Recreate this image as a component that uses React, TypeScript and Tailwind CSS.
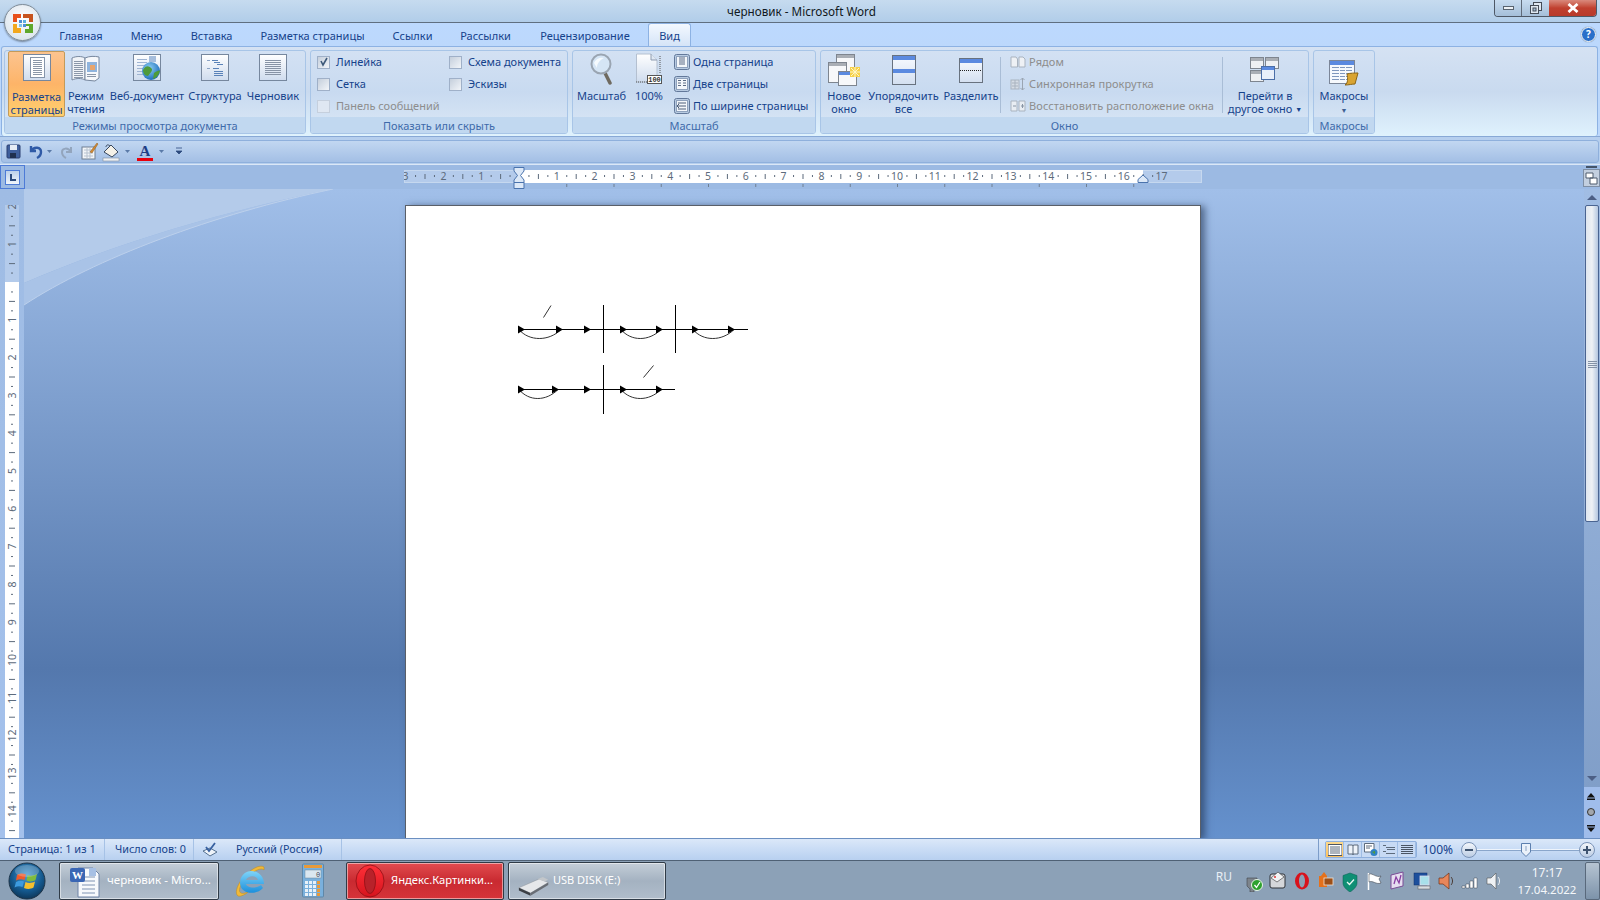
import React from 'react';

const ink = 'text-[#15428b]';

const Defs = () => (
  <svg className="absolute w-0 h-0">
    <defs>
      <linearGradient id="btn" x1="0" y1="0" x2="0" y2="1">
        <stop offset="0" stopColor="#ffffff" />
        <stop offset="1" stopColor="#cfdcee" />
      </linearGradient>
      <linearGradient id="hdr" x1="0" y1="0" x2="0" y2="1">
        <stop offset="0" stopColor="#f8fbff" />
        <stop offset="1" stopColor="#d3dff0" />
      </linearGradient>
      <radialGradient id="globe" cx="0.4" cy="0.35" r="0.7">
        <stop offset="0" stopColor="#8fd0f5" />
        <stop offset="1" stopColor="#1768b8" />
      </radialGradient>
      <radialGradient id="orb" cx="0.5" cy="0.35" r="0.7">
        <stop offset="0" stopColor="#4b9bd0" />
        <stop offset="0.6" stopColor="#14598f" />
        <stop offset="1" stopColor="#0c2f4d" />
      </radialGradient>
      <linearGradient id="opera" x1="0" y1="0" x2="0" y2="1">
        <stop offset="0" stopColor="#ff3038" />
        <stop offset="1" stopColor="#d5141e" />
      </linearGradient>
      <linearGradient id="ieBlue" x1="0" y1="0" x2="0" y2="1">
        <stop offset="0" stopColor="#7fd4f8" />
        <stop offset="1" stopColor="#1c8fdc" />
      </linearGradient>
    </defs>
  </svg>
);

const Lines = ({ x, y, w, n, step = 2, color = '#8b97a8' }: { x: number; y: number; w: number; n: number; step?: number; color?: string }) => (
  <>
    {Array.from({ length: n }).map((_, i) => (
      <rect key={i} x={x} y={y + i * step} width={w} height={1} fill={color} />
    ))}
  </>
);

const Frame = ({ children }: { children?: React.ReactNode }) => (
  <svg width="30" height="29" viewBox="0 0 30 29">
    <rect x="1.5" y="1.5" width="27" height="26" fill="url(#btn)" stroke="#76879e" />
    {children}
  </svg>
);

const PrintIcon = () => (
  <Frame>
    <rect x="8.5" y="4.5" width="14" height="20" fill="#fff" stroke="#8695aa" />
    <Lines x={11} y={7} w={9} n={8} />
  </Frame>
);

const ReadIcon = () => (
  <svg width="32" height="29" viewBox="0 0 32 29">
    <path d="M2 4 C6 2 12 2 15 4 L15 26 C12 24 6 24 2 26 Z" fill="#f0f3f7" stroke="#76879e" />
    <path d="M15 4 C19 2 25 2 29 3 L29 24 L25 27 L15 26 Z" fill="#f6f8fb" stroke="#76879e" />
    <Lines x={4} y={7} w={9} n={9} />
    <rect x="17" y="8" width="10" height="10" fill="#8fb4dd" />
    <rect x="20" y="11" width="5" height="5" fill="#e8a56c" />
    <Lines x={17} y={20} w={9} n={2} />
  </svg>
);

const WebIcon = () => (
  <Frame>
    <Lines x={5} y={6} w={10} n={6} step={3} color="#9fb4d2" />
    <rect x="17" y="3" width="7" height="6" fill="#a5bddc" />
    <circle cx="19" cy="18" r="9" fill="url(#globe)" />
    <path d="M11 17 C14 12 17 13 19 15 C22 17 18 20 16 23 C13 23 11 20 11 17 Z M22 20 C25 18 27 17 28 18 C27 22 24 25 21 26 Z" fill="#4f9b3a" />
  </Frame>
);

const OutlineIcon = () => (
  <Frame>
    <rect x="7" y="7" width="3" height="1" fill="#8aa2c4" />
    <rect x="12" y="7" width="6" height="1" fill="#5a82b8" />
    <rect x="14" y="9" width="6" height="1" fill="#5a82b8" />
    <rect x="17" y="11" width="6" height="1" fill="#5a82b8" />
    <rect x="7" y="15" width="3" height="1" fill="#8aa2c4" />
    <rect x="13" y="15" width="6" height="1" fill="#5a82b8" />
    <Lines x={14} y={18} w={9} n={3} step={2} color="#5a82b8" />
  </Frame>
);

const DraftIcon = () => (
  <Frame>
    <Lines x={7} y={7} w={16} n={8} color="#8793a5" />
  </Frame>
);

const ZoomGlass = () => (
  <svg width="24" height="32" viewBox="0 0 24 32">
    <path d="M15 20 L20 30" stroke="#6f6a60" strokeWidth="3.5" strokeLinecap="round" />
    <circle cx="11" cy="11" r="9.5" fill="#d5e5f5" stroke="#9aa5b2" strokeWidth="2" />
    <path d="M4 10 C6 5 11 4 14 5 C10 7 7 10 7 15 Z" fill="#f5fafe" />
  </svg>
);

const Zoom100 = () => (
  <svg width="28" height="32" viewBox="0 0 28 32">
    <path d="M1.5 1 L16 1 L22 7 L22 29 L1.5 29 Z" fill="url(#btn)" stroke="#b4c0d0" />
    <path d="M16 1 L16 7 L22 7" fill="#dfe8f3" stroke="#8d9bb0" />
    <path d="M1 29 H13 M25 3 V21" stroke="#555" strokeDasharray="1 1" fill="none" />
    <rect x="12.5" y="22.5" width="14" height="8" fill="#fff" stroke="#555" />
    <text x="19.5" y="29" textAnchor="middle" fontSize="7" fontWeight="700" fontFamily="'Liberation Mono', monospace" fill="#333">100</text>
  </svg>
);

const SmallBox = ({ children }: { children: React.ReactNode }) => (
  <svg width="16" height="16" viewBox="0 0 16 16" className="shrink-0">
    <rect x="0.5" y="0.5" width="15" height="15" rx="2" fill="#b8cbe2" stroke="#62789a" />
    <rect x="2.5" y="2.5" width="11" height="11" fill="#f4f7fb" stroke="#8fa2bd" />
    {children}
  </svg>
);

const WindowPane = ({ x, y, w, h, head = '#a9aeb5', body = '#f7f8fa', stroke = '#7e858f' }: { x: number; y: number; w: number; h: number; head?: string; body?: string; stroke?: string }) => (
  <>
    <rect x={x + 0.5} y={y + 0.5} width={w} height={h} fill={body} stroke={stroke} />
    <rect x={x + 1} y={y + 1} width={w - 1} height={3} fill={head} />
  </>
);

const NewWindowIcon = () => (
  <svg width="34" height="32" viewBox="0 0 34 32">
    <WindowPane x={9} y={0} w={18} h={24} />
    <WindowPane x={1} y={8} w={18} h={20} />
    <WindowPane x={11} y={17} w={18} h={14} head="#5b8ae0" />
    <rect x="23" y="13" width="10" height="10" fill="#f6d14a" />
    <path d="M28 13 V23 M23 18 H33 M24 14 L32 22 M32 14 L24 22" stroke="#fff6c8" strokeWidth="1" />
  </svg>
);

const ArrangeIcon = () => (
  <svg width="26" height="32" viewBox="0 0 26 32">
    <rect x="1.5" y="1.5" width="23" height="29" fill="url(#hdr)" stroke="#68727f" />
    <rect x="2" y="2" width="22" height="4" fill="#5b8ae0" />
    <rect x="2" y="15" width="22" height="4" fill="#5b8ae0" />
  </svg>
);

const SplitIcon = () => (
  <svg width="26" height="28" viewBox="0 0 26 28">
    <rect x="1.5" y="1.5" width="23" height="24" fill="url(#hdr)" stroke="#68727f" />
    <rect x="2" y="2" width="22" height="4" fill="#5b8ae0" />
    <path d="M2 13.5 H24" stroke="#222" strokeDasharray="1 1" />
  </svg>
);

const SwitchIcon = () => (
  <svg width="32" height="28" viewBox="0 0 32 28">
    <WindowPane x={1} y={1} w={13} h={11} body="#eef0f3" />
    <WindowPane x={16} y={1} w={13} h={11} body="#eef0f3" />
    <WindowPane x={1} y={14} w={13} h={11} body="#eef0f3" />
    <rect x="12.5" y="10.5" width="13" height="13" fill="#e8effa" stroke="#4b6ea8" />
    <rect x="13" y="11" width="12" height="3" fill="#5b8ae0" />
  </svg>
);

const MacroIcon = () => (
  <svg width="32" height="28" viewBox="0 0 32 28">
    <rect x="1.5" y="1.5" width="25" height="23" fill="#f6f9fd" stroke="#7b8698" />
    <rect x="2" y="2" width="24" height="4" fill="#5b8ae0" />
    <Lines x={4} y={8} w={7} n={5} step={3} color="#7f97bd" />
    <Lines x={12} y={8} w={5} n={5} step={3} color="#7f97bd" />
    <Lines x={18} y={8} w={6} n={5} step={3} color="#7f97bd" />
    <path d="M19 15 C22 14 27 14 30 14 L27 25 C24 25 21 26 17 26 C20 24 20 20 19 15 Z" fill="#d9a432" stroke="#8b6516" />
  </svg>
);

const Tabs = () => {
  const items: [string, string][] = [
    ['Главная', 'w-[70px]'],
    ['Меню', 'w-[61px]'],
    ['Вставка', 'w-[69px]'],
    ['Разметка страницы', 'w-[133px]'],
    ['Ссылки', 'w-[67px]'],
    ['Рассылки', 'w-[79px]'],
    ['Рецензирование', 'w-[120px]'],
  ];
  return (
    <div className="h-[24px] bg-gradient-to-b from-[#bcd9fe] to-[#bcd8fc] flex items-end pl-[46px] border-t border-[#5f6f80] relative shrink-0">
      {items.map(([t, w]) => (
        <div key={t} className={`${w} text-center h-[22px] leading-[24px] text-[11px] ${ink}`}>{t}</div>
      ))}
      <div className={`ml-[3px] w-[43px] h-[23px] text-center leading-[24px] text-[11px] ${ink} rounded-t-[3px] border border-b-0 border-[#8db2e3] bg-gradient-to-b from-[#f3f8ff] to-[#d5e4f7]`}>Вид</div>
      <div className="ml-auto mr-[4px] mb-[4px] w-[15px] h-[15px] rounded-full bg-[#2a6fc9] border border-white shadow-[0_0_1px_#456] text-white text-[10px] font-bold leading-[13px] text-center">?</div>
    </div>
  );
};

const Group = ({ label, className, children }: { label: string; className: string; children: React.ReactNode }) => (
  <div className={`${className} h-[84px] flex flex-col rounded-[3px] border border-[#a8c5e7] overflow-hidden bg-gradient-to-b from-[#d3e1f3] via-[#c8daf0] to-[#dbe8f6]`}>
    <div className="h-[66px] flex">{children}</div>
    <div className="h-[16px] bg-[#c1d8f0] text-center text-[11px] leading-[18px] text-[#3e6aaa]">{label}</div>
  </div>
);

const BigBtn = ({ w, icon, text, active, top = 'pt-[2px]' }: { w: string; icon: React.ReactNode; text: React.ReactNode; active?: boolean; top?: string }) => (
  <div className={`${w} h-[66px] flex flex-col items-center text-[11px] leading-[13px] ${ink} text-center ${active ? 'rounded-[2px] border border-[#c39a5a] bg-gradient-to-b from-[#fcc48f] via-[#fdb468] to-[#ffd06e]' : ''}`}>
    <div className={`h-[38px] shrink-0 flex items-start justify-center ${top}`}>{icon}</div>
    <div className="whitespace-nowrap">{text}</div>
  </div>
);

const Check = ({ label, checked, disabled }: { label: string; checked?: boolean; disabled?: boolean }) => (
  <div className={`h-[22px] flex items-center gap-[6px] text-[11px] whitespace-nowrap ${disabled ? 'text-[#8d8d8d]' : ink}`}>
    <div className={`w-[13px] h-[13px] border flex items-center justify-center ${disabled ? 'border-[#c5cfdd] bg-[#dfe7f2]' : 'border-[#9fb0c8] bg-gradient-to-br from-[#c5cfdc] to-[#f2f5f9]'}`}>
      {checked && (
        <svg width="10" height="10" viewBox="0 0 10 10">
          <path d="M2 4 L4 8 L8 1" stroke="#3f5a7a" strokeWidth="1.6" fill="none" />
        </svg>
      )}
    </div>
    <span>{label}</span>
  </div>
);

const ListRow = ({ icon, text, disabled }: { icon: React.ReactNode; text: string; disabled?: boolean }) => (
  <div className={`h-[22px] flex items-center gap-[3px] text-[11px] whitespace-nowrap ${disabled ? 'text-[#8d8d8d] tracking-[0.1px]' : ink}`}>
    {icon}
    <span>{text}</span>
  </div>
);

const GrayIcon = ({ kind }: { kind: number }) => (
  <svg width="16" height="14" viewBox="0 0 16 14" className="shrink-0">
    {kind === 0 && (
      <path d="M1 2 H6 L7.500 4 V12 H1 Z M9 2 H13 L15 4 V12 H9 Z" fill="#eef1f5" stroke="#a9b3bf" />
    )}
    {kind === 1 && (
      <>
        <rect x="1" y="3" width="8" height="9" fill="#d5dce5" stroke="#a9b3bf" />
        <path d="M2 6 H8 M2 9 H8 M5 3 V12" stroke="#a9b3bf" />
        <path d="M12.5 1 V13 M10.5 3 L12.5 1 L14.5 3 M10.5 11 L12.5 13 L14.5 11" stroke="#9aa5b2" fill="none" />
      </>
    )}
    {kind === 2 && (
      <>
        <path d="M1 2 H7 V12 H1 Z M9 2 H15 V12 H9 Z" fill="#e8edf3" stroke="#a9b3bf" />
        <path d="M3 7 H6 M11 7 H14 M12.5 5 V9" stroke="#8895a5" />
      </>
    )}
  </svg>
);

const Ribbon = () => (
  <div className="h-[90px] shrink-0 bg-[#bcd8fc] px-[1px]">
    <div className="h-[90px] rounded-[3px] border border-[#8db2e3] border-b-0 pl-[2px] pt-[3px] flex gap-[4px] bg-gradient-to-b from-[#d5e2f3] via-[#c9daef] to-[#dff2fd] mr-[1px]">
      <Group label="Режимы просмотра документа" className="w-[302px]">
        <div className="flex pl-[3px]">
          <BigBtn w="w-[57px]" active top="pt-[1px]" icon={<PrintIcon />} text={<>Разметка<br />страницы</>} />
          <BigBtn w="w-[42px]" top="pt-[3px]" icon={<ReadIcon />} text={<>Режим<br />чтения</>} />
          <BigBtn w="w-[80px]" icon={<WebIcon />} text="Веб-документ" />
          <BigBtn w="w-[56px]" icon={<OutlineIcon />} text="Структура" />
          <BigBtn w="w-[60px]" icon={<DraftIcon />} text="Черновик" />
        </div>
      </Group>
      <Group label="Показать или скрыть" className="w-[258px]">
        <div className="w-[138px] pl-[6px]">
          <Check label="Линейка" checked />
          <Check label="Сетка" />
          <Check label="Панель сообщений" disabled />
        </div>
        <div>
          <Check label="Схема документа" />
          <Check label="Эскизы" />
        </div>
      </Group>
      <Group label="Масштаб" className="w-[244px]">
        <div className="flex pl-[2px]">
          <BigBtn w="w-[53px]" icon={<ZoomGlass />} text="Масштаб" />
          <BigBtn w="w-[42px]" icon={<Zoom100 />} text="100%" />
          <div className="ml-[4px]">
            <ListRow text="Одна страница" icon={<SmallBox><path d="M5 4 H11 M5 6 H11 M5 8 H11 M5 10 H11" stroke="#5a6b85" /></SmallBox>} />
            <ListRow text="Две страницы" icon={<SmallBox><path d="M4 4.5 H7 M4 7 H7 M4 9.5 H7 M9 4.5 H12 M9 7 H12 M9 9.5 H12" stroke="#5a6b85" /></SmallBox>} />
            <ListRow text="По ширине страницы" icon={<SmallBox><path d="M4 5 H12 M4 8 H12 M4 11 H12 M3 8 L5 6 M3 8 L5 10" stroke="#4b5d78" /></SmallBox>} />
          </div>
        </div>
      </Group>
      <Group label="Окно" className="w-[489px]">
        <div className="flex pl-[2px]">
          <BigBtn w="w-[42px]" top="pt-[3px]" icon={<NewWindowIcon />} text={<>Новое<br />окно</>} />
          <BigBtn w="w-[77px]" top="pt-[3px]" icon={<ArrangeIcon />} text={<>Упорядочить<br />все</>} />
          <BigBtn w="w-[58px]" top="pt-[6px]" icon={<SplitIcon />} text="Разделить" />
          <div className="w-px h-[56px] bg-[#a9bdd6] mt-[6px] mr-[9px]" />
          <div className="w-[212px]">
            <ListRow disabled text="Рядом" icon={<GrayIcon kind={0} />} />
            <ListRow disabled text="Синхронная прокрутка" icon={<GrayIcon kind={1} />} />
            <ListRow disabled text="Восстановить расположение окна" icon={<GrayIcon kind={2} />} />
          </div>
          <div className="w-px h-[56px] bg-[#a9bdd6] mt-[6px]" />
          <BigBtn
            w="w-[84px]"
            top="pt-[5px]"
            icon={<SwitchIcon />}
            text={<>Перейти в<br />другое окно <span className="text-[7px] align-[1px]">▼</span></>}
          />
        </div>
      </Group>
      <Group label="Макросы" className="w-[62px]">
        <BigBtn
          w="w-[60px]"
          top="pt-[8px]"
          icon={<MacroIcon />}
          text={<>Макросы<br /><span className="text-[7px] text-[#3e5f92]">▼</span></>}
        />
      </Group>
    </div>
  </div>
);

const Qat = () => (
  <div className="h-[28px] shrink-0 bg-[#b6cfee] pt-[3px] pb-px px-[1px] border-t border-[#88a9d6]">
    <div className="h-[23px] rounded-[3px] border border-[#8fb0dc] bg-gradient-to-b from-[#c2d7f1] to-[#a3bfe5] flex items-center pl-[3px] relative">
      <svg width="180" height="20" viewBox="5 142 180 20">
        <rect x="7" y="145" width="13" height="13" rx="1" fill="#3f5f9c" stroke="#2b3f70" />
        <rect x="10" y="145" width="7" height="5" fill="#e6ecf5" />
        <rect x="10" y="153" width="6" height="5" fill="#20304f" />
        <path d="M31 146 L31 151 L36 151 M31 151 C34 146 41 147 41 152 C41 155 39 157 37 158" stroke="#2f5aa6" strokeWidth="2.4" fill="none" />
        <path d="M47 150 L52 150 L49.5 153 Z" fill="#5a7aa8" />
        <path d="M71 147 L71 152 L66 152 M71 152 C68 147 62 148 62 152 C62 155 64 157 66 158" stroke="#93a5bd" strokeWidth="2" fill="none" />
        <rect x="82" y="147" width="13" height="12" fill="#f2f5f8" stroke="#6f7f92" />
        <path d="M84 150 H93 M84 153 H93 M84 156 H93 M87 148 V158 M90 148 V158" stroke="#b7c2cf" />
        <path d="M90 152 L97 143 L98 144 L92 153 Z" fill="#d48a32" stroke="#8a5a1c" strokeWidth="0.5" />
        <path d="M104 152 L111 145 L118 152 L112 157 Z" fill="#f4f1e8" stroke="#39485e" />
        <path d="M110 146 C108 144 106 145 106 147" stroke="#39485e" fill="none" />
        <rect x="103" y="158" width="16" height="3" fill="#eef1f4" stroke="#7f8ea0" strokeWidth="0.6" />
        <path d="M125 150 L130 150 L127.5 153 Z" fill="#5a7aa8" />
        <text x="145" y="156" textAnchor="middle" fontSize="15" fontWeight="700" fontFamily="'Liberation Serif', serif" fill="#1f3f86">A</text>
        <rect x="137" y="158" width="16" height="3" fill="#e8000c" />
        <path d="M159 150 L164 150 L161.5 153 Z" fill="#5a7aa8" />
        <path d="M176 148 H182 M176 151 L182 151 L179 154 Z" stroke="#2c4a7d" fill="#2c4a7d" strokeWidth="0.8" />
      </svg>
    </div>
  </div>
);

const HRuler = () => {
  const cm = 37.8;
  const origin = 115;
  const nums: number[] = [];
  for (let i = -3; i <= 17; i++) nums.push(i);
  return (
    <svg width="800" height="25" viewBox="0 0 800 25" className="absolute top-0 left-[404px]">
      <rect x="0.5" y="5.5" width="797" height="12" fill="#b4cbeb" stroke="#c6d8ef" />
      <rect x={origin} y="5" width="624" height="13" fill="#ffffff" />
      {nums.map((n) => {
        const x = origin + n * cm;
        return (
          <g key={n} fill="#5d6b7c">
            {n !== 0 && (
              <text x={x} y="15" textAnchor="middle" fontSize="10.5" fontFamily="'Noto Sans', sans-serif">{Math.abs(n)}</text>
            )}
            {n < 17 && (
              <>
                <rect x={x + cm * 0.25} y="10" width="1" height="2" />
                <rect x={x + cm * 0.5} y="9" width="1" height="5" />
                <rect x={x + cm * 0.75} y="10" width="1" height="2" />
              </>
            )}
          </g>
        );
      })}
      {Array.from({ length: 13 }).map((_, i) => (
        <rect key={i} x={origin + 47.25 * (i + 1)} y="19" width="1" height="3" fill="#6f7f92" />
      ))}
      <path d="M110 2.5 H120 V6 L116.5 10.500 L120 15 V23.500 H110 V15 L113.5 10.500 L110 6 Z M110 17.5 H120" fill="#dce8f7" stroke="#4a73ad" />
      <path d="M734 17.5 V14.5 L739 10 L744 14.5 V17.5 Z" fill="#dce8f7" stroke="#4a73ad" />
    </svg>
  );
};

const RulerRow = () => (
  <div className="h-[25px] shrink-0 bg-[#9cbae3] relative flex justify-between border-t border-[#dbe7f6]">
    <div className="w-[25px] h-[24px] border border-[#4d7bd6] flex items-center justify-center">
      <div className="w-[15px] h-[15px] border border-[#4d7bd6] bg-gradient-to-b from-[#bcd0ea] to-[#f0f5fb] relative">
        <div className="absolute left-[4px] top-[3px] w-[6px] h-[7px] border-l-2 border-b-2 border-[#2c4a7d]" />
      </div>
    </div>
    <HRuler />
    <div className="w-[17px] flex flex-col">
      <div className="h-[3px] mt-[1px] mx-[3px] border-t-2 border-[#44546a]" />
      <div className="h-[18px] bg-[#c3cfdf] border border-[#7f8fa5] flex items-center justify-center">
        <svg width="13" height="13" viewBox="0 0 13 13">
          <path d="M1 1 H8 L8 6 H1 Z M5 6 H12 V12 H5 Z" fill="#fff" stroke="#4d5a6c" />
        </svg>
      </div>
    </div>
  </div>
);

const VRuler = () => {
  const cm = 37.8;
  const origin = 77;
  const nums: number[] = [];
  for (let i = -2; i <= 14; i++) nums.push(i);
  return (
    <div className="w-[24px] shrink-0 bg-gradient-to-b from-[#9fbce4] to-[#a4c1ec] pl-[5px] pt-[16px]">
      <svg width="14" height="633" viewBox="0 0 14 633">
        <rect width="14" height="633" fill="#ffffff" />
        <rect width="14" height="77" fill="#b4cbeb" />
        {nums.map((n) => {
          const y = origin + n * cm;
          return (
            <g key={n} fill="#5d6b7c">
              {n !== 0 && (
                <text x="0" y="0" transform={`translate(10.5 ${y}) rotate(-90)`} textAnchor="middle" fontSize="10.5" fontFamily="'Noto Sans', sans-serif">{Math.abs(n)}</text>
              )}
              <rect x="6" y={y + cm * 0.25} width="2" height="1" />
              <rect x="4" y={y + cm * 0.5} width="6" height="1" />
              <rect x="6" y={y + cm * 0.75} width="2" height="1" />
            </g>
          );
        })}
      </svg>
    </div>
  );
};

const Arc = ({ x1, x2, y }: { x1: number; x2: number; y: number }) => (
  <path d={`M${x1} ${y} C${x1 + 10} ${y + 12} ${x2 - 12} ${y + 12} ${x2} ${y}`} stroke="#333" fill="none" />
);

const Tri = ({ x, y, w = 7 }: { x: number; y: number; w?: number }) => (
  <path d={`M${x} ${y - 4} L${x + w} ${y} L${x} ${y + 4} Z`} fill="#000" />
);

const Scheme = () => (
  <svg width="232" height="112" viewBox="517 304 232 112" className="block ml-[111px] mt-[98px]">
    <path d="M518 329.5 H748 M518 389.5 H675" stroke="#000" />
    <path d="M603.5 305 V353 M675.5 305 V353 M603.5 365 V414" stroke="#000" />
    <path d="M543.5 317.5 L551 305.5 M643.5 377.5 L653.5 365.5" stroke="#333" />
    <Arc x1={519} x2={561} y={329.5} />
    <Arc x1={621} x2={661} y={329.5} />
    <Arc x1={693} x2={734} y={329.5} />
    <Arc x1={519} x2={558} y={389.5} />
    <Arc x1={621} x2={661} y={389.5} />
    {[518, 556, 584, 620, 656, 692, 728].map((x) => <Tri key={x} x={x} y={329.5} />)}
    {[518, 552, 584, 620, 656].map((x) => <Tri key={x} x={x} y={389.5} />)}
  </svg>
);

const DocArea = () => (
  <div className="flex-1 relative overflow-hidden bg-gradient-to-b from-[#a1bfe9] via-[#5478ad] via-[74%] to-[#6591cd] pt-[16px] pl-[381px]">
    <svg width="320" height="120" viewBox="0 0 320 120" className="absolute top-0 left-0">
      <path d="M0 0 H309 C200 22 90 55 0 94 Z" fill="#b4cbea" />
      <path d="M309 0 C200 22 90 55 0 94 V116 C70 70 190 25 309 0 Z" fill="#a9c3e7" />
      <path d="M0 116 C70 70 190 25 309 0" stroke="#bcd0ec" fill="none" />
    </svg>
    <div className="relative w-[796px] h-[634px] bg-white border-t border-x border-[#5a5f68] shadow-[4px_1px_7px_rgba(30,50,80,0.6)]">
      <Scheme />
    </div>
  </div>
);

const ScrollBar = () => (
  <div className="w-[16px] shrink-0 flex flex-col bg-gradient-to-b from-[#a1bde4] to-[#7e9cc6]">
    <div className="h-[16px] flex items-center justify-center">
      <svg width="10" height="6" viewBox="0 0 10 6"><path d="M0 6 L5 1 L10 6 Z" fill="#4c5f85" /></svg>
    </div>
    <div className="h-[317px] mx-px rounded-[2px] border border-[#4a6491] bg-gradient-to-r from-[#dfe6ef] via-[#eef1f5] to-[#b5c7e0] flex items-center justify-center">
      <svg width="9" height="8" viewBox="0 0 9 8"><path d="M0 1.5 H9 M0 3.5 H9 M0 5.5 H9 M0 7.5 H9" stroke="#8492a6" /></svg>
    </div>
    <div className="flex-1" />
    <div className="h-[16px] flex items-center justify-center">
      <svg width="10" height="6" viewBox="0 0 10 6"><path d="M0 0 L5 5 L10 0 Z" fill="#4c5f85" /></svg>
    </div>
    <div className="h-[51px] bg-[#a0bdeb] flex flex-col items-center justify-around py-[2px] pr-[3px]">
      <svg width="8" height="8" viewBox="0 0 8 8"><path d="M4 0 L8 4.500 H0 Z M0 5.500 H8 V7 H0 Z" fill="#111" /></svg>
      <svg width="8" height="8" viewBox="0 0 8 8"><circle cx="4" cy="4" r="3.500" fill="#a3a7ac" stroke="#333" /></svg>
      <svg width="8" height="8" viewBox="0 0 8 8"><path d="M0 1 H8 V2.500 H0 Z M0 3.500 H8 L4 8 Z" fill="#111" /></svg>
    </div>
  </div>
);

const ViewBtn = ({ active, children }: { active?: boolean; children: React.ReactNode }) => (
  <div className={`flex-1 h-full flex items-center justify-center border-r border-[#9fbde4] ${active ? 'bg-gradient-to-b from-[#fbd88c] to-[#fdc25e]' : ''}`}>
    {children}
  </div>
);

const StatusBar = () => (
  <div className="h-[22px] shrink-0 flex items-stretch border-t border-[#6b8fc1] bg-gradient-to-b from-[#dbe8f9] via-[#c9dcf5] to-[#b8d0f0] text-[11px] text-[#15428b] relative">
    <div className="w-[105px] pl-[8px] leading-[20px] border-r border-[#a6c2e6] whitespace-nowrap">Страница: 1 из 1</div>
    <div className="w-[89px] pl-[10px] leading-[20px] border-r border-[#a6c2e6] whitespace-nowrap text-[10.8px]">Число слов: 0</div>
    <div className="w-[148px] flex items-center border-r border-[#a6c2e6] whitespace-nowrap pl-[8px] gap-[18px]">
      <svg width="16" height="16" viewBox="0 0 16 16">
        <path d="M1 9 L8 6 L15 10 L8 14 Z" fill="#eef3f9" stroke="#55708f" />
        <path d="M4 5 L7 9 L13 1" stroke="#3760a0" strokeWidth="1.8" fill="none" />
      </svg>
      <span className="text-[10.7px]">Русский (Россия)</span>
    </div>
    <div className="ml-auto w-[282px] h-[21px] flex items-center border-l border-[#7d9dc9] pl-[6px]">
      <div className="w-[92px] h-[17px] rounded-[2px] border border-[#8fb0dd] bg-[#c7daf4] flex">
        <ViewBtn active><svg width="14" height="12" viewBox="0 0 14 12"><path d="M0 .5 H14 V11.5 H0 Z" fill="#fff" stroke="#4a5564" /><path d="M2 3 H12 M2 5 H12 M2 7 H12 M2 9 H12" stroke="#5d6b7c" /></svg></ViewBtn>
        <ViewBtn><svg width="12" height="12" viewBox="0 0 12 12"><path d="M1 1 H5.5 L6 2 L6.500 1 H11 V10 H6 L6 11 L6 10 H1 Z" fill="#eef3f9" stroke="#5d6b7c" /><path d="M6 2 V10" stroke="#5d6b7c" /></svg></ViewBtn>
        <ViewBtn><svg width="14" height="13" viewBox="0 0 14 13"><path d="M.5 .5 H10 V9 H.5 Z" fill="#fff" stroke="#5d6b7c" /><path d="M2 3 H8 M2 5 H6" stroke="#5d6b7c" /><circle cx="10" cy="9.500" r="3.500" fill="#2f82c4" /><path d="M8 9 L11 8 L11 11 Z" fill="#4f9b3a" /></svg></ViewBtn>
        <ViewBtn><svg width="12" height="10" viewBox="0 0 12 10"><path d="M0 .5 H3 M3 2.500 H12 M4 4.500 H12 M0 6.500 H3 M3 8.500 H12" stroke="#5d6b7c" /></svg></ViewBtn>
        <ViewBtn><svg width="12" height="10" viewBox="0 0 12 10"><path d="M0 .5 H12 M0 2.500 H12 M0 4.500 H12 M0 6.500 H12 M0 8.500 H12" stroke="#4a5564" /></svg></ViewBtn>
      </div>
      <div className="w-[36px] text-right text-[12px] leading-[20px] mr-[8px]">100%</div>
      <div className="w-[16px] h-[16px] rounded-full border border-[#7a93b7] bg-gradient-to-b from-[#f4f7fb] to-[#bccde4] flex items-center justify-center shrink-0">
        <div className="w-[8px] h-[2px] bg-[#3f5470]" />
      </div>
      <div className="w-[102px] h-[16px] flex items-center relative">
        <div className="w-full h-px bg-[#eef4fc] shadow-[0_1px_0_#8aa6cb]" />
        <svg width="10" height="14" viewBox="0 0 10 14" className="absolute left-[44px] top-[1px]">
          <path d="M.5 .5 H9.500 V9 L5 13.500 L.5 9 Z" fill="#eaf1fa" stroke="#5c7fae" />
          <path d="M5 3 V8" stroke="#8aa2c2" />
        </svg>
      </div>
      <div className="w-[16px] h-[16px] rounded-full border border-[#7a93b7] bg-gradient-to-b from-[#f4f7fb] to-[#bccde4] flex items-center justify-center shrink-0 relative">
        <div className="w-[8px] h-[2px] bg-[#3f5470]" />
        <div className="absolute w-[2px] h-[8px] bg-[#3f5470]" />
      </div>
    </div>
  </div>
);

const StartOrb = () => (
  <svg width="38" height="38" viewBox="0 0 38 38">
    <circle cx="19" cy="19" r="18" fill="url(#orb)" stroke="#1d3347" />
    <path d="M9 13 C12 11 15 11 18 12.500 L16.500 18 C14 17 11 17 8 18.500 Z" fill="#ee5b2c" />
    <path d="M19.500 13 C22 14 25 14 29 12 L27.500 18 C24 20 21 19.500 18.500 18.500 Z" fill="#7fbb3d" />
    <path d="M8 20 C11 18.500 13.500 18.500 16 19.500 L14.500 25 C12 24 9.500 24 6.500 25.500 Z" fill="#3d9be0" />
    <path d="M17.500 20 C20 21 23 21.500 27 19.500 L25.500 25.500 C22 27.500 19 27 16 26 Z" fill="#f5c02e" />
    <ellipse cx="19" cy="9" rx="12" ry="6" fill="#ffffff" opacity="0.22" />
  </svg>
);

const WordDoc = () => (
  <svg width="34" height="34" viewBox="0 0 34 34">
    <path d="M10 4 H25 L31 10 V33 H10 Z" fill="#f7f9fc" stroke="#6f83a6" />
    <path d="M14 13 H27 M14 17 H27 M14 21 H27 M14 25 H27 M14 29 H27" stroke="#7f93b3" />
    <rect x="21" y="4" width="7" height="8" fill="#a7c0e4" />
    <rect x="2" y="4" width="15" height="14" rx="2" fill="#3a66b4" />
    <text x="9.500" y="15" textAnchor="middle" fontSize="11" fontWeight="700" fontFamily="'Liberation Serif', serif" fill="#fff">W</text>
  </svg>
);

const IeIcon = () => (
  <svg width="34" height="34" viewBox="0 0 34 34">
    <path d="M30 3 C26 0 16 5 8 15 C2 23 1 30 4 32 C7 33 12 30 14 28 C10 30 6 30 5.500 27 C5 23 10 14 18 9 C24 5 28 4 30 6 Z" fill="#f0b93a" stroke="#c28a17" strokeWidth="0.5" />
    <path d="M17 7 C24 7 30 12 30 20 L12 20 C13 24 22 25 27 21 L29 24 C22 32 6 30 6 19 C6 12 11 7 17 7 Z M12 16 H24 C23 11 14 11 12 16 Z" fill="url(#ieBlue)" fillRule="evenodd" />
  </svg>
);

const CalcIcon = () => (
  <svg width="24" height="36" viewBox="0 0 24 36">
    <rect x="1.500" y="1" width="21" height="33" rx="1" fill="#7ab0dc" stroke="#5e87a8" />
    <rect x="3" y="2" width="18" height="3" fill="#e89a3a" />
    <rect x="4" y="7" width="16" height="8" fill="#dbe7f0" stroke="#6d879c" strokeWidth="0.5" />
    <text x="17" y="14" textAnchor="middle" fontSize="7" fontFamily="'Liberation Mono', monospace" fill="#445">0</text>
    {[0, 1, 2, 3].map((r) =>
      [0, 1, 2, 3].map((c) => (
        <rect key={`${r}${c}`} x={4 + c * 4} y={18 + r * 4} width="3" height="3" fill={c === 3 ? '#e89a3a' : '#e8f1f8'} />
      ))
    )}
  </svg>
);

const OperaO = () => (
  <svg width="30" height="34" viewBox="0 0 30 34">
    <ellipse cx="15" cy="17" rx="14" ry="16" fill="url(#opera)" stroke="#8f0f15" strokeWidth="0.8" />
    <ellipse cx="15" cy="17" rx="5.500" ry="12.500" fill="#b8222a" stroke="#8f0f15" strokeWidth="0.8" />
  </svg>
);

const UsbIcon = () => (
  <svg width="32" height="22" viewBox="0 0 36 24">
    <path d="M1 14 L24 4 L34 8 L14 20 Z" fill="#e6e8ea" stroke="#8a8f96" strokeWidth="0.5" />
    <path d="M1 14 L14 20 L14 23 L1 17 Z" fill="#3b3f44" />
    <path d="M14 20 L34 8 L34 11 L14 23 Z" fill="#686d74" />
    <path d="M22 4 L28 2 L34 5 L30 7 Z" fill="#c2c6ca" />
  </svg>
);

const TaskBtn = ({ w, icon, text, red, size }: { w: string; icon: React.ReactNode; text: string; red?: boolean; size: string }) => (
  <div className={`${w} h-[38px] mt-[1px] rounded-[2px] border border-[#2f3b47] shadow-[inset_0_0_0_1px_rgba(255,255,255,0.5)] flex items-center text-white whitespace-nowrap ${red ? 'bg-gradient-to-b from-[#e24b4f] via-[#c92a31] to-[#d6343a]' : 'bg-gradient-to-b from-[#c4ced8] via-[#a4b2c1] to-[#b0bdcb]'}`}>
    {icon}
    <span className={`${size} -mt-[2px]`}>{text}</span>
  </div>
);

const TrayIcons = () => (
  <svg width="256" height="22" viewBox="1244 868 256 22" className="shrink-0">
    <path d="M1247 876 H1257 V884 L1254 887 V890 H1250 V887 L1247 884 Z" fill="#7d848c" stroke="#3f454c" strokeWidth="0.6" />
    <circle cx="1257" cy="883" r="5.500" fill="#2ea12e" stroke="#e8f4e8" />
    <path d="M1254.500 883 L1256.500 885.500 L1260 880" stroke="#fff" strokeWidth="1.300" fill="none" />
    <rect x="1270" y="872" width="15" height="14" rx="2" fill="#d5d7da" stroke="#2f3338" />
    <path d="M1271 876 L1278 870 L1284 875 L1277 880 Z" fill="#f3f4f5" stroke="#333" strokeWidth="0.6" />
    <circle cx="1275" cy="875" r="1" fill="#d33" />
    <ellipse cx="1302" cy="879" rx="7" ry="8.500" fill="#d8121c" />
    <ellipse cx="1302" cy="879" rx="3" ry="6.500" fill="#8ca0b5" />
    <rect x="1319" y="874" width="8" height="11" fill="#e5711b" />
    <rect x="1324" y="876" width="9" height="7" fill="#9c4f18" stroke="#f0e4d8" strokeWidth="0.8" />
    <path d="M1321 874 L1324 870 L1327 874 Z" fill="#e5711b" />
    <path d="M1350 871 L1357 873.500 V881 C1357 885 1353 888 1350 890 C1347 888 1343 885 1343 881 V873.500 Z" fill="#0f8f74" stroke="#0b5e50" strokeWidth="0.5" />
    <path d="M1347 880 L1349.500 882.500 L1354 877.500" stroke="#eaf8f3" strokeWidth="1.300" fill="none" />
    <path d="M1368.500 871 V888" stroke="#fff" strokeWidth="1.500" />
    <path d="M1369 872 C1373 871 1376 876 1381 874 L1379 877 L1381 881 C1376 883 1373 878 1369 880 Z" fill="#fff" stroke="#2a3138" strokeWidth="0.5" />
    <path d="M1391 873 L1403 870 V884 L1391 887 Z" fill="#e6def0" stroke="#7a4c96" />
    <path d="M1394 882 L1396 875 L1399 881 L1401 873" stroke="#8a3fa3" strokeWidth="1.300" fill="none" />
    <rect x="1414" y="871" width="13" height="12" fill="#1d4f9c" stroke="#12306a" strokeWidth="0.5" />
    <rect x="1420" y="874" width="9" height="9" fill="#a8e0ea" stroke="#dde" strokeWidth="0.8" />
    <rect x="1418" y="884" width="12" height="3" fill="#d8dde2" stroke="#555" strokeWidth="0.5" />
    <path d="M1439 876 H1443 L1449 871 V887 L1443 882 H1439 Z" fill="#e8865a" stroke="#6e2f14" strokeWidth="0.7" />
    <path d="M1451 875 C1453 877 1453 881 1451 883" stroke="#4a3a33" fill="none" />
    <path d="M1462 884 H1465 V886 H1462 Z M1466 882 H1469 V886 H1466 Z M1470 879 H1473 V886 H1470 Z M1474 876 H1477 V886 H1474 Z" fill="#fff" stroke="#2a3138" strokeWidth="0.4" />
    <path d="M1487 876 H1491 L1496 871 V887 L1491 882 H1487 Z" fill="#eef1f4" stroke="#555" strokeWidth="0.6" />
    <path d="M1498 875 C1500 877 1500 881 1498 883" stroke="#eef1f4" fill="none" />
  </svg>
);

const Taskbar = () => (
  <div className="h-[40px] shrink-0 flex bg-[#8ca1b7] border-t border-[#4f6175]">
    <div className="w-[59px] flex items-center pl-[8px]"><StartOrb /></div>
    <TaskBtn w="w-[160px]" size="text-[11.6px]" icon={<div className="ml-[8px] mr-[5px] flex"><WordDoc /></div>} text="черновик - Micro..." />
    <div className="w-[127px] flex items-center">
      <div className="w-[64px] flex justify-center"><IeIcon /></div>
      <div className="w-[60px] flex justify-center"><CalcIcon /></div>
    </div>
    <TaskBtn w="w-[158px]" size="text-[11.2px]" red icon={<div className="ml-[8px] mr-[6px] flex"><OperaO /></div>} text="Яндекс.Картинки..." />
    <div className="w-[4px]" />
    <TaskBtn w="w-[158px]" size="text-[11px]" icon={<div className="ml-[9px] mr-[3px] mt-[10px] flex"><UsbIcon /></div>} text="USB DISK (E:)" />
    <div className="ml-auto flex items-center text-white">
      <div className="text-[12px] text-[#e8eef4] mr-[12px] -mt-[7px]">RU</div>
      <TrayIcons />
      <div className="w-[76px] ml-[9px] text-center text-[12px] leading-[17px] text-[#f4f7fa]">
        <div>17:17</div>
        <div className="text-[11.5px]">17.04.2022</div>
      </div>
      <div className="w-[15px] h-[38px] border border-[#59697b] rounded-[2px] bg-gradient-to-b from-[#b6c4d2] to-[#7d93aa]" />
    </div>
  </div>
);

export default function App() {
  return (
    <div className="w-[1600px] h-[900px] overflow-hidden flex flex-col font-['Noto_Sans','Open_Sans',sans-serif]">
      <Defs />
      <div className="h-[22px] shrink-0 relative flex bg-gradient-to-b from-[#c6dbef] to-[#b1cde9]">
        <div className="flex-1" />
        <div className="text-[11.7px] leading-[23px] text-[#101820] whitespace-nowrap pl-[6px]">черновик - Microsoft Word</div>
        <div className="flex-1 flex justify-end pr-[3px]">
          <div className="w-[103px] h-[17px] flex rounded-b-[4px] overflow-hidden border border-t-0 border-[#4e5866]">
            <div className="w-[27px] bg-gradient-to-b from-[#c8dcf0] to-[#a5bfd9] border-r border-[#5f6b7a] flex items-center justify-center">
              <div className="w-[11px] h-[4px] bg-[#eef2f6] border border-[#59636f]" />
            </div>
            <div className="w-[27px] bg-gradient-to-b from-[#c8dcf0] to-[#a5bfd9] flex items-center justify-center">
              <svg width="12" height="12" viewBox="0 0 12 12"><rect x="3.500" y=".5" width="8" height="8" fill="#dfe8f2" stroke="#444c57" /><rect x=".5" y="3.500" width="8" height="8" fill="#dfe8f2" stroke="#444c57" /><rect x="3" y="6" width="3" height="3" fill="#a5bfd9" stroke="#444c57" /></svg>
            </div>
            <div className="flex-1 bg-gradient-to-b from-[#d9897c] via-[#c0402f] to-[#b83a2a] flex items-center justify-center">
              <svg width="12" height="10" viewBox="0 0 12 10"><path d="M1.500 1 L10.500 9 M10.500 1 L1.500 9" stroke="#fff" strokeWidth="2.800" /></svg>
            </div>
          </div>
        </div>
        <div className="absolute left-[4px] top-[4px] w-[37px] h-[37px] z-10 rounded-full bg-[radial-gradient(circle_at_50%_40%,#ffffff,#dde6ee_75%,#8a97a3)] border border-[#7f8c98] shadow-[0_1px_2px_rgba(0,0,0,0.4)] flex items-center justify-center">
          <svg width="24" height="24" viewBox="0 0 24 24">
            <path d="M2 3 H10 V7 H6 V11 H2 Z" fill="#e8511c" />
            <path d="M2 13 H6 V17 H10 V22 H2 Z" fill="#f2a71d" />
            <path d="M14 13 H22 V22 H14 V18 H18 V15 H14 Z" fill="#5fa82d" />
            <path d="M12 3 H22 V11 H18 V7 H12 Z" fill="#c7541e" />
            <rect x="8" y="9" width="3" height="3" fill="#4d8dd6" />
            <rect x="12" y="9" width="3" height="3" fill="#5cb0e2" />
            <rect x="8" y="13" width="3" height="3" fill="#7cc3ea" />
            <rect x="12" y="13" width="3" height="3" fill="#4d8dd6" />
          </svg>
        </div>
      </div>
      <Tabs />
      <Ribbon />
      <Qat />
      <RulerRow />
      <div className="flex-1 min-h-0 flex">
        <VRuler />
        <DocArea />
        <ScrollBar />
      </div>
      <StatusBar />
      <Taskbar />
    </div>
  );
}
